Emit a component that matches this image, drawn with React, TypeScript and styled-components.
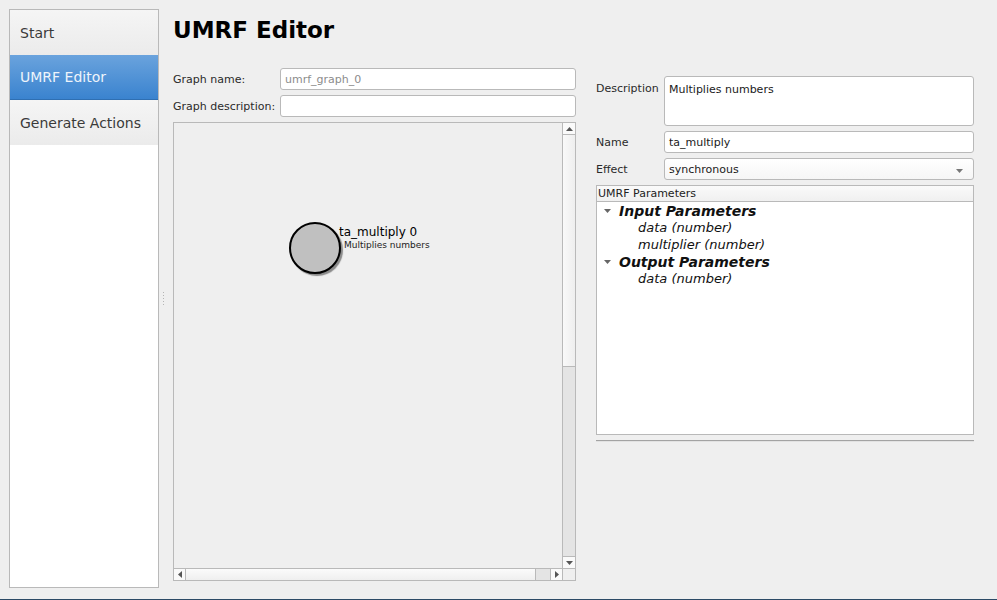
import styled, { createGlobalStyle } from 'styled-components';

const GlobalStyle = createGlobalStyle`
    html, body {
        margin: 0;
        padding: 0;
        background: #efefef;
        font-family: 'DejaVu Sans', 'Liberation Sans', sans-serif;
        color: #1a1a1a;
    }
`;

const pages = ['Start', 'UMRF Editor', 'Generate Actions'];

const Window = styled.div`
    width: 997px;
    height: 600px;
    box-sizing: border-box;
    border-bottom: 1px solid #2c4a66;
    display: flex;
    padding: 9px 0 11px 9px;
`;

const Sidebar = styled.nav`
    width: 150px;
    box-sizing: border-box;
    border: 1px solid #b9b9b9;
    background: #ffffff;
    display: flex;
    flex-direction: column;
`;

const NavItem = styled.div<{ $active?: boolean }>`
    height: 45px;
    display: flex;
    align-items: center;
    padding-left: 10px;
    font-size: 14px;
    color: ${(p) => (p.$active ? '#eef4fb' : '#3a3a3a')};
    background: ${(p) =>
        p.$active
            ? 'linear-gradient(#6aa3dd, #3a83cf)'
            : 'linear-gradient(#f5f5f5, #ebebeb)'};
    border-bottom: ${(p) => (p.$active ? '1px solid #2f6fb2' : 'none')};
    box-sizing: border-box;
`;

const Splitter = styled.div`
    width: 14px;
    display: flex;
    align-items: center;
    justify-content: center;
`;

const Grip = styled.div`
    width: 1px;
    height: 14px;
    margin-left: -6px;
    background: repeating-linear-gradient(#b4b4b4 0 1px, transparent 1px 3px);
`;

const Main = styled.main`
    flex: 1;
    display: flex;
    flex-direction: column;
`;

const Title = styled.h1`
    margin: 8px 0 0;
    height: 51px;
    font-size: 23px;
    font-weight: bold;
    color: #000;
`;

const Panes = styled.div`
    flex: 1;
    display: flex;
    gap: 20px;
`;

const LeftPane = styled.div`
    width: 403px;
    display: flex;
    flex-direction: column;
`;

const FormGrid = styled.div`
    display: grid;
    grid-template-columns: 107px 296px;
    row-gap: 5px;
    align-items: center;
    margin-bottom: 5px;
`;

const Label = styled.label`
    font-size: 11px;
    color: #2a2a2a;
`;

const Field = styled.div<{ $tall?: boolean; $muted?: boolean }>`
    box-sizing: border-box;
    height: ${(p) => (p.$tall ? '50px' : '22px')};
    border: 1px solid #b9b9b9;
    border-radius: 3px;
    background: #fff;
    padding: ${(p) => (p.$tall ? '6px 4px' : '0 4px')};
    display: flex;
    align-items: ${(p) => (p.$tall ? 'flex-start' : 'center')};
    font-size: 11px;
    color: ${(p) => (p.$muted ? '#8c8c8c' : '#1a1a1a')};
`;

const Combo = styled(Field)`
    justify-content: space-between;
    background: linear-gradient(#ffffff, #f6f6f6);
`;

const Canvas = styled.div`
    height: 459px;
    box-sizing: border-box;
    border: 1px solid #b9b9b9;
    display: grid;
    grid-template-columns: 1fr 13px;
    grid-template-rows: 1fr 12px;
`;

const Scene = styled.div`
    position: relative;
    background: #efefef;
`;

const Node = styled.div`
    position: absolute;
    left: 115px;
    top: 96px;
    display: flex;
    align-items: flex-start;
`;

const NodeCircle = styled.div`
    width: 48px;
    height: 48px;
    border-radius: 50%;
    border: 2px solid #000;
    background: #c0c0c0;
    box-shadow: 2px 2px 1px #8a8a8a;
    margin-top: 3px;
`;

const NodeText = styled.div`
    margin: 6px 0 0 -2px;
    display: flex;
    flex-direction: column;
`;

const NodeName = styled.span`
    font-size: 12px;
    color: #000;
    line-height: 15px;
`;

const NodeDesc = styled.span`
    font-size: 9px;
    color: #222;
    margin-left: 5px;
    line-height: 11px;
`;

const VScroll = styled.div`
    border-left: 1px solid #b9b9b9;
    display: flex;
    flex-direction: column;
`;

const HScroll = styled.div`
    border-top: 1px solid #b9b9b9;
    display: flex;
`;

const Corner = styled.div`
    border-left: 1px solid #b9b9b9;
    border-top: 1px solid #b9b9b9;
    background: #efefef;
`;

const ArrowButton = styled.div<{ $side: 'top' | 'bottom' | 'left' | 'right' }>`
    flex: 0 0 12px;
    ${(p) => (p.$side === 'top' || p.$side === 'bottom' ? 'height: 12px;' : 'width: 12px;')}
    background: #fafafa;
    box-sizing: border-box;
    ${(p) => `border-${p.$side === 'top' ? 'bottom' : p.$side === 'bottom' ? 'top' : p.$side === 'left' ? 'right' : 'left'}: 1px solid #b9b9b9;`}
    display: flex;
    align-items: center;
    justify-content: center;
`;

const Handle = styled.div<{ $vertical?: boolean; $size: number }>`
    flex: 0 0 ${(p) => p.$size}px;
    background: ${(p) =>
        p.$vertical
            ? 'linear-gradient(90deg, #f9f9f9, #eeeeee)'
            : 'linear-gradient(#fbfbfb, #efefef)'};
    box-sizing: border-box;
    ${(p) => (p.$vertical ? 'border-bottom: 1px solid #b9b9b9;' : 'border-right: 1px solid #b9b9b9;')}
`;

const Track = styled.div`
    flex: 1;
    background: #e4e4e4;
`;

const RightPane = styled.div`
    width: 378px;
    margin-top: 8px;
    display: flex;
    flex-direction: column;
`;

const PropGrid = styled.div`
    display: grid;
    grid-template-columns: 68px 310px;
    row-gap: 5px;
    align-items: center;
`;

const TopLabel = styled(Label)`
    align-self: start;
    margin-top: 6px;
`;

const Tree = styled.div`
    grid-column: 1 / 3;
    height: 250px;
    box-sizing: border-box;
    border: 1px solid #b9b9b9;
    background: #fff;
    display: flex;
    flex-direction: column;
`;

const TreeHeader = styled.div`
    height: 16px;
    box-sizing: border-box;
    border-bottom: 1px solid #b9b9b9;
    background: linear-gradient(#fafafa, #f0f0f0);
    font-size: 11px;
    padding-left: 1px;
    display: flex;
    align-items: center;
    color: #222;
`;

const TreeRow = styled.div<{ $group?: boolean }>`
    height: 17px;
    display: flex;
    align-items: center;
    padding-left: ${(p) => (p.$group ? '4px' : '41px')};
    font-size: ${(p) => (p.$group ? '14px' : '13px')};
    font-style: oblique;
    font-weight: ${(p) => (p.$group ? 'bold' : 'normal')};
    color: #111;
`;

const Twisty = styled.span`
    width: 12px;
    display: flex;
    justify-content: center;
    margin-right: 6px;
`;

const Rule = styled.div`
    margin-top: 5px;
    height: 1px;
    background: #a3a3a3;
    border-bottom: 1px solid #e2e2e2;
`;

const Tri = ({ dir, color = '#555' }: { dir: 'up' | 'down' | 'left' | 'right'; color?: string }) => {
    const pts = {
        up: '0,4 3.5,0 7,4',
        down: '0,0 3.5,4 7,0',
        left: '4,0 0,3.5 4,7',
        right: '0,0 4,3.5 0,7',
    }[dir];
    const vertical = dir === 'up' || dir === 'down';
    return (
        <svg width={vertical ? 7 : 4} height={vertical ? 4 : 7}>
            <polygon points={pts} fill={color} />
        </svg>
    );
};

const treeRows = [
    { text: 'Input Parameters', group: true },
    { text: 'data (number)' },
    { text: 'multiplier (number)' },
    { text: 'Output Parameters', group: true },
    { text: 'data (number)' },
];

export default function App() {
    return (
        <>
            <GlobalStyle />
            <Window>
                <Sidebar>
                    {pages.map((p) => (
                        <NavItem key={p} $active={p === 'UMRF Editor'}>
                            {p}
                        </NavItem>
                    ))}
                </Sidebar>
                <Splitter>
                    <Grip />
                </Splitter>
                <Main>
                    <Title>UMRF Editor</Title>
                    <Panes>
                        <LeftPane>
                            <FormGrid>
                                <Label>Graph name:</Label>
                                <Field $muted>umrf_graph_0</Field>
                                <Label>Graph description:</Label>
                                <Field />
                            </FormGrid>
                            <Canvas>
                                <Scene>
                                    <Node>
                                        <NodeCircle />
                                        <NodeText>
                                            <NodeName>ta_multiply 0</NodeName>
                                            <NodeDesc>Multiplies numbers</NodeDesc>
                                        </NodeText>
                                    </Node>
                                </Scene>
                                <VScroll>
                                    <ArrowButton $side="top">
                                        <Tri dir="up" />
                                    </ArrowButton>
                                    <Handle $vertical $size={232} />
                                    <Track />
                                    <ArrowButton $side="bottom">
                                        <Tri dir="down" />
                                    </ArrowButton>
                                </VScroll>
                                <HScroll>
                                    <ArrowButton $side="left">
                                        <Tri dir="left" />
                                    </ArrowButton>
                                    <Handle $size={350} />
                                    <Track />
                                    <ArrowButton $side="right">
                                        <Tri dir="right" />
                                    </ArrowButton>
                                </HScroll>
                                <Corner />
                            </Canvas>
                        </LeftPane>
                        <RightPane>
                            <PropGrid>
                                <TopLabel>Description</TopLabel>
                                <Field $tall>Multiplies numbers</Field>
                                <Label>Name</Label>
                                <Field>ta_multiply</Field>
                                <Label>Effect</Label>
                                <Combo>
                                    synchronous
                                    <span style={{ marginRight: 6 }}>
                                        <Tri dir="down" color="#777" />
                                    </span>
                                </Combo>
                                <Tree>
                                    <TreeHeader>UMRF Parameters</TreeHeader>
                                    {treeRows.map((r, i) => (
                                        <TreeRow key={i} $group={r.group}>
                                            {r.group && (
                                                <Twisty>
                                                    <Tri dir="down" color="#666" />
                                                </Twisty>
                                            )}
                                            {r.text}
                                        </TreeRow>
                                    ))}
                                </Tree>
                            </PropGrid>
                            <Rule />
                        </RightPane>
                    </Panes>
                </Main>
            </Window>
        </>
    );
}
